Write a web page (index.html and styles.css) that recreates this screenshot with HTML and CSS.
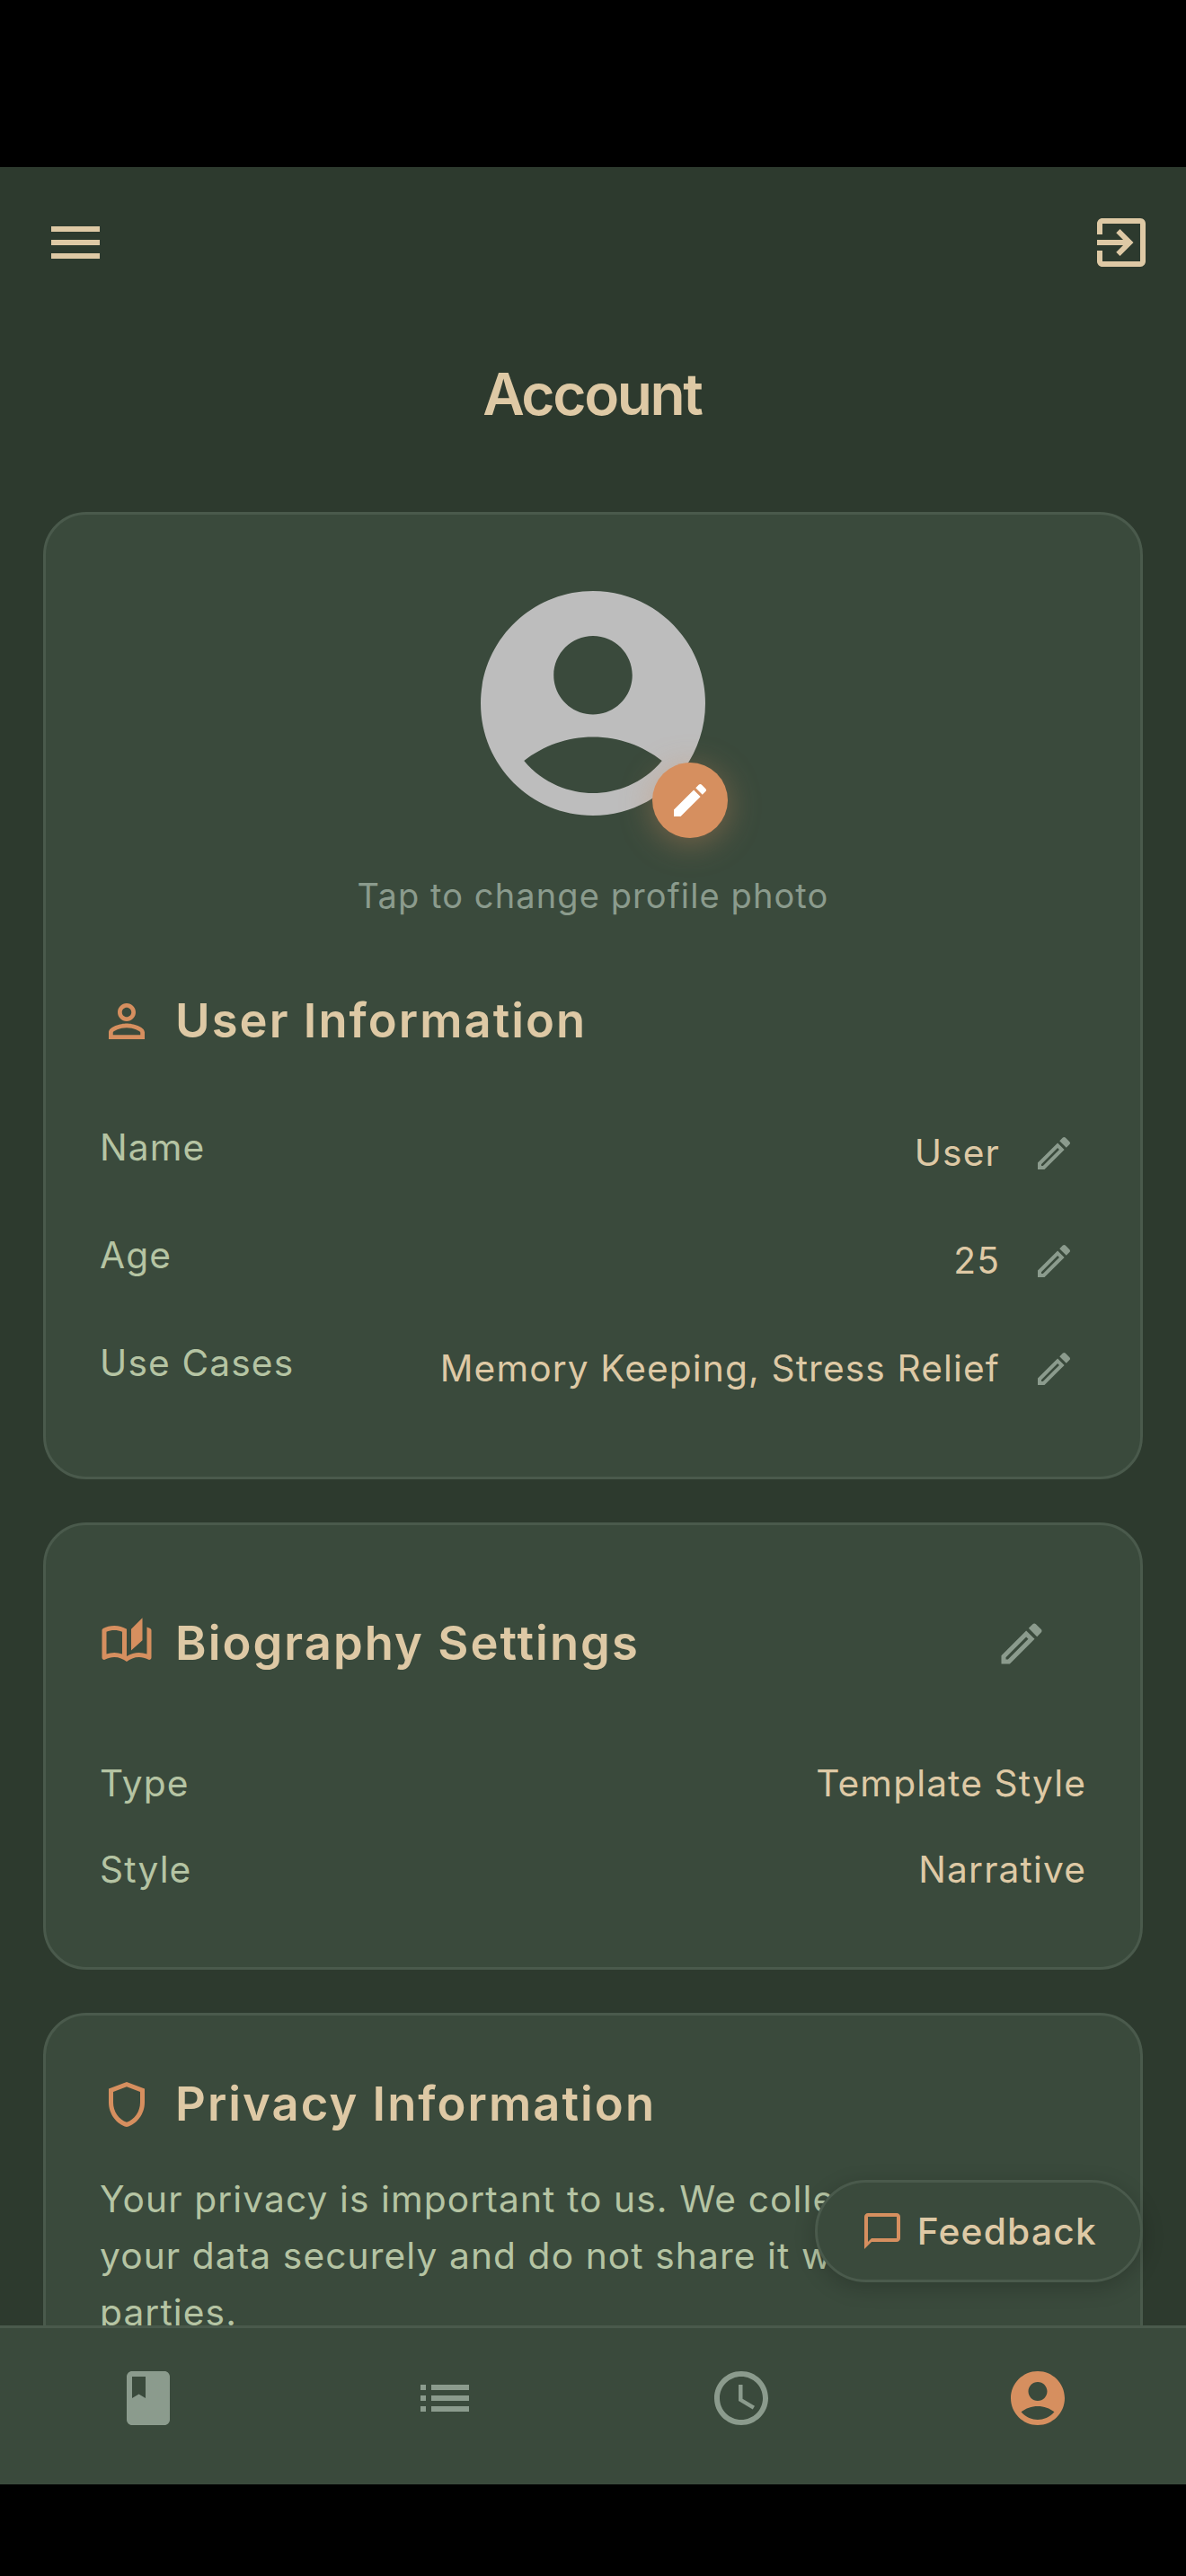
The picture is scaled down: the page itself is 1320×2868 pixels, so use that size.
FILE: index.html
```html
<!DOCTYPE html>
<html lang="en">
<head>
    <meta charset="UTF-8">
    <meta name="viewport" content="width=device-width, initial-scale=1.0">
    <title>Account</title>
    <link rel="stylesheet" href="styles.css">
</head>
<body>

    <!-- Shared icon shapes -->
    <svg class="icon-defs" aria-hidden="true">
        <symbol id="icon-edit" viewBox="0 0 24 24">
            <path d="M14.06 9.02l.92.92L5.92 19H5v-.92l9.06-9.06M17.66 3c-.25 0-.51.1-.7.29l-1.83 1.83 3.75 3.75 1.83-1.83c.39-.39.39-1.02 0-1.41l-2.34-2.34c-.2-.2-.45-.29-.71-.29zm-3.6 3.19L3 17.25V21h3.75L17.81 9.94l-3.75-3.75z"/>
        </symbol>
        <symbol id="icon-account" viewBox="0 0 24 24">
            <path d="M12 2C6.48 2 2 6.48 2 12s4.48 10 10 10 10-4.48 10-10S17.52 2 12 2zm0 4c1.93 0 3.5 1.57 3.5 3.5S13.93 13 12 13s-3.5-1.57-3.5-3.5S10.07 6 12 6zm0 14c-2.03 0-4.43-.82-6.14-2.88C7.55 15.8 9.68 15 12 15s4.45.8 6.14 2.12C16.43 19.18 14.03 20 12 20z"/>
        </symbol>
    </svg>

    <div class="app">

        <!-- App Bar -->
        <header class="app-bar">
            <svg class="icon icon-lg" viewBox="0 0 24 24"><path d="M3 18h18v-2H3v2zm0-5h18v-2H3v2zm0-7v2h18V6H3z"/></svg>
            <svg class="icon icon-lg" viewBox="0 0 24 24"><path d="M10.09 15.59L11.5 17l5-5-5-5-1.41 1.41L12.67 11H3v2h9.67l-2.58 2.59zM19 3H5c-1.11 0-2 .9-2 2v4h2V5h14v14H5v-4H3v4c0 1.1.89 2 2 2h14c1.1 0 2-.9 2-2V5c0-1.1-.9-2-2-2z"/></svg>
        </header>

        <main class="content">
            <h1>Account</h1>

            <!-- User Information -->
            <section class="card">
                <div class="avatar">
                    <svg class="avatar-image"><use href="#icon-account"/></svg>
                    <div class="avatar-badge">
                        <svg class="icon icon-sm" viewBox="0 0 24 24"><path d="M3 17.25V21h3.75L17.81 9.94l-3.75-3.75L3 17.25zM20.71 7.04c.39-.39.39-1.02 0-1.41l-2.34-2.34c-.39-.39-1.02-.39-1.41 0l-1.83 1.83 3.75 3.75 1.83-1.83z"/></svg>
                    </div>
                </div>
                <p class="avatar-hint">Tap to change profile photo</p>

                <div class="card-header">
                    <svg class="icon icon-md accent" viewBox="0 0 24 24"><path d="M12 5.9c1.16 0 2.1.94 2.1 2.1s-.94 2.1-2.1 2.1S9.9 9.16 9.9 8s.94-2.1 2.1-2.1m0 9c2.97 0 6.1 1.46 6.1 2.1v1.1H5.9V17c0-.64 3.13-2.1 6.1-2.1M12 4C9.79 4 8 5.79 8 8s1.79 4 4 4 4-1.79 4-4-1.79-4-4-4zm0 9c-2.67 0-8 1.34-8 4v3h16v-3c0-2.66-5.33-4-8-4z"/></svg>
                    <h2>User Information</h2>
                </div>

                <div class="field-list">
                    <div class="field editable">
                        <span class="label">Name</span>
                        <span class="value">User</span>
                        <svg class="icon icon-sm muted"><use href="#icon-edit"/></svg>
                    </div>
                    <div class="field editable">
                        <span class="label">Age</span>
                        <span class="value">25</span>
                        <svg class="icon icon-sm muted"><use href="#icon-edit"/></svg>
                    </div>
                    <div class="field editable">
                        <span class="label">Use Cases</span>
                        <span class="value">Memory Keeping, Stress Relief</span>
                        <svg class="icon icon-sm muted"><use href="#icon-edit"/></svg>
                    </div>
                </div>
            </section>

            <!-- Biography Settings -->
            <section class="card">
                <div class="card-header with-action">
                    <svg class="icon icon-md accent" viewBox="0 0 24 24"><path d="M22.47 5.2C22 4.96 21.51 4.76 21 4.59v12.03C19.86 16.21 18.69 16 17.5 16c-1.9 0-3.78.54-5.5 1.58V5.48C10.38 4.55 8.51 4 6.5 4 4.71 4 3.02 4.44 1.53 5.2 1.2 5.36 1 5.71 1 6.08v12.08c0 .58.47.99 1 .99.16 0 .32-.04.48-.12C3.69 18.4 5.05 18 6.5 18c2.07 0 3.98.82 5.5 2 1.52-1.18 3.43-2 5.5-2 1.45 0 2.81.4 4.02 1.04.16.08.32.12.48.12.52 0 1-.41 1-.99V6.08c0-.37-.2-.72-.53-.88zM10 16.62C8.86 16.21 7.69 16 6.5 16s-2.36.21-3.5.62V6.71C4.11 6.24 5.28 6 6.5 6c1.2 0 2.39.25 3.5.72v9.9zM19 .5l-5 5V15l5-4.5V.5z"/></svg>
                    <h2>Biography Settings</h2>
                    <div class="icon-button">
                        <svg class="icon icon-md muted"><use href="#icon-edit"/></svg>
                    </div>
                </div>

                <div class="field-list compact">
                    <div class="field">
                        <span class="label">Type</span>
                        <span class="value">Template Style</span>
                    </div>
                    <div class="field">
                        <span class="label">Style</span>
                        <span class="value">Narrative</span>
                    </div>
                </div>
            </section>

            <!-- Privacy Information -->
            <section class="card">
                <div class="card-header">
                    <svg class="icon icon-md accent" viewBox="0 0 24 24"><path d="M12 2L4 5v6.09c0 5.05 3.41 9.76 8 10.91 4.59-1.15 8-5.86 8-10.91V5l-8-3zm6 9.09c0 4-2.55 7.7-6 8.83-3.45-1.13-6-4.82-6-8.83v-4.7l6-2.25 6 2.25v4.7z"/></svg>
                    <h2>Privacy Information</h2>
                </div>
                <p class="card-text">Your privacy is important to us. We collect and store<br>your data securely and do not share it with third<br>parties.</p>
            </section>

            <!-- Floating feedback button -->
            <button class="feedback">
                <svg class="icon icon-sm accent" viewBox="0 0 24 24"><path d="M20 2H4c-1.1 0-2 .9-2 2v18l4-4h14c1.1 0 2-.9 2-2V4c0-1.1-.9-2-2-2zm0 14H6l-2 2V4h16v12z"/></svg>
                Feedback
            </button>
        </main>

        <!-- Bottom Navigation -->
        <nav class="bottom-nav">
            <svg class="icon icon-lg muted" viewBox="0 0 24 24"><path d="M18 2H6c-1.1 0-2 .9-2 2v16c0 1.1.9 2 2 2h12c1.1 0 2-.9 2-2V4c0-1.1-.9-2-2-2zM6 4h5v8l-2.5-1.5L6 12V4z"/></svg>
            <svg class="icon icon-lg muted" viewBox="0 0 24 24"><path d="M3 13h2v-2H3v2zm0 4h2v-2H3v2zm0-8h2V7H3v2zm4 4h14v-2H7v2zm0 4h14v-2H7v2zM7 7v2h14V7H7z"/></svg>
            <svg class="icon icon-lg muted" viewBox="0 0 24 24"><path d="M11.99 2C6.47 2 2 6.48 2 12s4.47 10 9.99 10C17.52 22 22 17.52 22 12S17.52 2 11.99 2zM12 20c-4.42 0-8-3.58-8-8s3.58-8 8-8 8 3.58 8 8-3.58 8-8 8zm.5-13H11v6l5.25 3.15.75-1.23-4.5-2.67z"/></svg>
            <svg class="icon icon-lg accent"><use href="#icon-account"/></svg>
        </nav>

    </div>

</body>
</html>
```

FILE: styles.css
```css
/* --- Base & Body Styles --- */
* {
    box-sizing: border-box;
}

body {
    font-family: 'Inter', sans-serif;
    background-color: #000000;
    color: #dec9a5;
    margin: 0;
}

/* --- App Shell --- */
.app {
    display: flex;
    flex-direction: column;
    height: 2868px;
    padding: 186px 0 102px;
}

.app-bar {
    display: flex;
    align-items: center;
    justify-content: space-between;
    flex: none;
    height: 168px;
    padding: 0 36px 0 48px;
    background-color: #2d3a2e;
}

.content {
    position: relative;
    display: flex;
    flex-direction: column;
    flex: 1;
    min-height: 0;
    padding: 48px 48px 0;
    overflow: hidden;
    background-color: #2d3a2e;
}

/* --- Typography --- */
h1 {
    margin: 0 0 94px;
    font-size: 64px;
    font-weight: 600;
    line-height: 74px;
    letter-spacing: -2.4px;
    text-indent: -2.4px;
    text-align: center;
}

h2 {
    margin: 0 0 3px;
    font-size: 52.5px;
    font-weight: 600;
    letter-spacing: 2.05px;
}

/* --- Icons --- */
.icon-defs {
    position: absolute;
    width: 0;
    height: 0;
}

.icon {
    display: block;
    flex: none;
    fill: currentColor;
}

.icon-sm { width: 48px; height: 48px; }
.icon-md { width: 60px; height: 60px; }
.icon-lg { width: 72px; height: 72px; }

.accent { color: #d68f5f; }
.muted { color: #8b9b8d; }

/* --- Cards --- */
.card {
    flex: none;
    margin-bottom: 48px;
    padding: 60px;
    background-color: #3a4a3c;
    border: 3px solid #4a5a4c;
    border-radius: 48px;
}

.card-header {
    display: flex;
    align-items: center;
    gap: 24px;
    height: 78px;
}

.card-header.with-action {
    height: 144px;
}

.icon-button {
    display: flex;
    align-items: center;
    justify-content: center;
    width: 144px;
    height: 144px;
    margin-left: auto;
}

.card-text {
    margin: 35px 0 0;
    color: #b5c4a3;
    font-size: 40.7px;
    line-height: 63px;
    letter-spacing: 1.1px;
    white-space: nowrap;
}

/* --- Avatar --- */
.avatar {
    position: relative;
    width: 300px;
    height: 300px;
    margin: 0 auto;
}

.avatar-image {
    display: block;
    width: 100%;
    height: 100%;
    fill: #bdbdbd;
}

.avatar-badge {
    position: absolute;
    right: 0;
    bottom: 0;
    padding: 18px;
    border-radius: 50%;
    background-color: #d68f5f;
    color: white;
    box-shadow: 0 6px 36px rgb(214 143 95 / 0.4);
}

.avatar-hint {
    margin: 36px 0 73px;
    color: #8b9b8d;
    font-size: 38px;
    line-height: 56px;
    letter-spacing: 1.1px;
    text-align: center;
}

/* --- Fields --- */
.field-list {
    margin-top: 48px;
}

.field-list.compact {
    margin-top: 36px;
}

.field {
    display: flex;
    justify-content: space-between;
    padding: 18px 0;
    font-size: 40.7px;
    line-height: 60px;
    letter-spacing: 1.12px;
}

.field.editable {
    align-items: center;
    height: 120px;
    padding: 24px 12px 24px 0;
}

.editable .label {
    align-self: flex-start;
}

.editable .value {
    margin-left: auto;
    margin-right: 36px;
}

.label {
    color: #b5c4a3;
}

/* --- Feedback Button --- */
.feedback {
    position: absolute;
    right: 48px;
    bottom: 48px;
    display: flex;
    align-items: center;
    gap: 15px;
    height: 114px;
    padding: 0 48px;
    font-family: inherit;
    font-size: 40.7px;
    font-weight: 500;
    letter-spacing: 1.25px;
    color: inherit;
    background-color: #3a4a3c;
    border: 3px solid #4a5a4c;
    border-radius: 57px;
    box-shadow: 0 6px 24px rgb(0 0 0 / 0.2);
}

/* --- Bottom Navigation --- */
.bottom-nav {
    display: flex;
    flex: none;
    justify-content: space-around;
    height: 177px;
    padding-top: 42px;
    background-color: #3a4a3c;
    border-top: 3px solid #4a5a4c;
}
```
